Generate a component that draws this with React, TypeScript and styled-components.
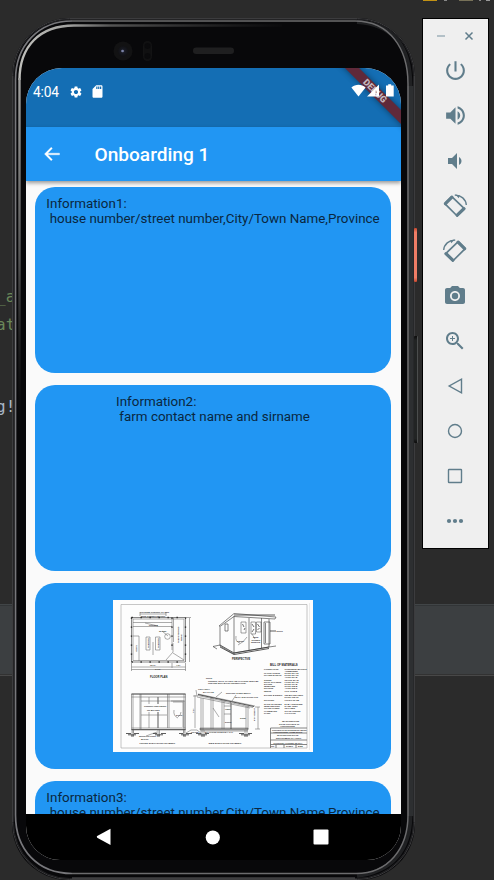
import React from "react";
import styled, { createGlobalStyle } from "styled-components";

const Global = createGlobalStyle`
  * { box-sizing: border-box; }
  body { margin: 0; background: #2b2b2b; overflow: hidden; font-family: Roboto, sans-serif; }
  svg { display: block; }
`;

const Desktop = styled.main`
  position: relative;
  width: 494px;
  height: 880px;
  overflow: hidden;
  display: flex;
  align-items: flex-start;
  gap: 7px;
  padding: 18px 0 0 12px;
  background: linear-gradient(
    #2b2b2b 604px,
    #414547 604px,
    #414547 605px,
    #323537 605px,
    #323537 606px,
    #3c3f41 606px,
    #3c3f41 674px,
    #323232 674px,
    #323232 675px,
    #484848 675px,
    #484848 676px,
    #2b2b2b 676px
  );
`;

const CodeText = styled.span<{ $top: number; $left: number; $color: string }>`
  position: absolute;
  top: ${(p) => p.$top}px;
  left: ${(p) => p.$left}px;
  color: ${(p) => p.$color};
  font: 16px/20px "DejaVu Sans Mono", monospace;
  white-space: pre;
`;

const TabMark = styled.i<{ $left: number; $width: number; $color: string }>`
  position: absolute;
  top: 0;
  left: ${(p) => p.$left}px;
  width: ${(p) => p.$width}px;
  height: 1px;
  background: ${(p) => p.$color};
`;

const Phone = styled.section`
  position: relative;
  flex: none;
  width: 403px;
  height: 862px;
  border-radius: 58px 58px 56px 56px;
  background: #08080a;
  padding: 50px 14px 20px;
`;

const Bezel = styled.svg`
  position: absolute;
  inset: 0;
`;

const SideKey = styled.i<{ $top: number; $height: number; $power?: boolean }>`
  position: absolute;
  z-index: 1;
  left: 402px;
  top: ${(p) => p.$top}px;
  width: ${(p) => (p.$power ? 3 : 4)}px;
  height: ${(p) => p.$height}px;
  border-radius: 1px;
  background: ${(p) =>
    p.$power ? "linear-gradient(#c4452c, #ee7d66 8%, #ee7d66 92%, #c4452c)" : "linear-gradient(#0c0c0c, #222424 4%, #222424 96%, #0c0c0c)"};
  border-right: ${(p) => (p.$power ? "0" : "1px solid #4b4d4d")};
`;

const Screen = styled.div`
  position: relative;
  width: 375px;
  height: 792px;
  overflow: hidden;
  border-radius: 36px 36px 34px 34px;
  background: #fafafa;
  display: flex;
  flex-direction: column;
`;

const StatusBar = styled.header`
  flex: none;
  height: 59px;
  display: flex;
  align-items: flex-start;
  padding: 15px 6px 0 7px;
  background: #146eb4;
  color: #fff;
`;

const Clock = styled.time`
  width: 36px;
  font-size: 13.8px;
  line-height: 18px;
  letter-spacing: -0.2px;
  white-space: nowrap;
`;

const StatusIcons = styled.div<{ $end?: boolean }>`
  position: relative;
  z-index: 3;
  display: flex;
  align-items: center;
  gap: 7px;
  margin-top: 1px;
  ${(p) => p.$end && "margin-left: auto; gap: 1px;"}
`;

const Ribbon = styled.div`
  position: absolute;
  z-index: 2;
  top: 17.5px;
  right: -28px;
  width: 108px;
  height: 10px;
  transform: rotate(45deg);
  background: #60293a;
  box-shadow: 0 0 6px rgba(0, 0, 0, 0.45);
  color: #c4b6bd;
  font-size: 9.2px;
  font-weight: 900;
  line-height: 10px;
  text-align: center;
`;

const AppBar = styled.header`
  position: relative;
  z-index: 1;
  flex: none;
  height: 53.5px;
  display: flex;
  align-items: center;
  gap: 32.5px;
  padding-left: 16px;
  background: #2196f3;
  box-shadow: 0 2px 4px rgba(0, 0, 0, 0.4);
`;

const Title = styled.h1`
  margin: 2px 0 0;
  color: #fff;
  font-size: 19.1px;
  font-weight: 500;
  line-height: 24px;
`;

const List = styled.div`
  flex: 1;
  min-height: 0;
  overflow: hidden;
  padding: 6px 10px 0 9px;
  display: flex;
  flex-direction: column;
  gap: 11.5px;
`;

const Card = styled.article`
  flex: none;
  height: 186.5px;
  border-radius: 20px;
  background: #2196f3;
  display: flex;
  justify-content: center;
  align-items: flex-start;
  padding-top: 9px;
`;

const Info = styled.p`
  margin: 0;
  color: #0a2740;
  font-size: 13.4px;
  line-height: 15.8px;
  white-space: pre;
`;

const Plan = styled.svg`
  margin-top: 8px;
  background: #fdfdfd;
`;

const NavBar = styled.nav`
  flex: none;
  height: 46px;
  background: #000;
  display: flex;
  align-items: center;
  justify-content: space-between;
  padding: 0 72px 0 70px;
`;

const Tools = styled.aside`
  flex: none;
  width: 67px;
  height: 531px;
  border: 1px solid #000;
  background: #efefef;
  color: #607d8b;
`;

const WindowButtons = styled.div`
  display: flex;
  justify-content: space-between;
  align-items: center;
  padding: 5px 14px 0 13px;
  height: 29px;
`;

const ToolButton = styled.button`
  display: flex;
  width: 64px;
  height: 45px;
  padding: 0;
  border: 0;
  background: none;
  color: inherit;
  align-items: center;
  justify-content: center;
`;

const Icon = ({ d, size = 24, children }: { d?: string; size?: number; children?: React.ReactNode }) => (
  <svg width={size} height={size} viewBox="0 0 24 24" fill="currentColor">
    {d && <path d={d} />}
    {children}
  </svg>
);

const rotateIcon = (
  <g fill="none" stroke="currentColor">
    <path d="M8.8 2.6 1.8 9.6 14.2 22 21.600 14.900Z" strokeWidth="1.7" strokeLinejoin="round" />
    <path d="M8.9 3.200 2.400 9.700M14.200 21.200 20.900 14.700" strokeWidth="3.2" strokeLinecap="round" />
    <path d="M11.800 1.200C18 .8 23 5.500 23.300 11" strokeWidth="1.4" />
    <path d="m12.300.6 4.500.9-1 2.700Z" fill="currentColor" stroke="none" />
  </g>
);

const tools: { label: string; icon: React.ReactNode }[] = [
  { label: "Power", icon: <Icon size={25} d="M13 3h-2v10h2V3zm4.83 2.17-1.42 1.42C17.99 7.86 19 9.81 19 12c0 3.87-3.13 7-7 7s-7-3.13-7-7c0-2.19 1.01-4.14 2.58-5.42L6.17 5.17C4.23 6.82 3 9.26 3 12c0 4.97 4.03 9 9 9s9-4.03 9-9c0-2.74-1.23-5.18-3.17-6.83z" /> },
  { label: "Volume up", icon: <Icon size={25} d="M3 9v6h4l5 5V4L7 9H3zm13.5 3c0-1.77-1.02-3.29-2.5-4.03v8.05c1.48-.73 2.5-2.25 2.5-4.02zM14 3.23v2.06c2.89.86 5 3.54 5 6.71s-2.11 5.85-5 6.71v2.06c4.01-.91 7-4.49 7-8.77s-2.99-7.86-7-8.77z" /> },
  { label: "Volume down", icon: <Icon d="M18.5 12c0-1.77-1.02-3.29-2.5-4.03v8.05c1.48-.73 2.5-2.25 2.5-4.02zM5 9v6h4l5 5V4L9 9H5z" /> },
  { label: "Rotate left", icon: <Icon>{rotateIcon}</Icon> },
  { label: "Rotate right", icon: <Icon><g transform="translate(24 0) scale(-1 1)">{rotateIcon}</g></Icon> },
  { label: "Screenshot", icon: <Icon><circle cx="12" cy="12" r="3.2" /><path d="M9 2 7.17 4H4c-1.1 0-2 .9-2 2v12c0 1.1.9 2 2 2h16c1.1 0 2-.9 2-2V6c0-1.1-.9-2-2-2h-3.17L15 2H9zm3 15c-2.76 0-5-2.24-5-5s2.24-5 5-5 5 2.24 5 5-2.24 5-5 5z" /></Icon> },
  { label: "Zoom", icon: <Icon d="m15.5 14h-.79l-.28-.27C15.41 12.59 16 11.11 16 9.5 16 5.91 13.09 3 9.5 3S3 5.91 3 9.5 5.91 16 9.5 16c1.61 0 3.09-.59 4.23-1.57l.27.28v.79l5 4.99L20.49 19l-4.99-5zm-6 0C7.01 14 5 11.99 5 9.5S7.01 5 9.5 5 14 7.01 14 9.5 11.99 14 9.5 14zm2.5-4h-2v2H9v-2H7V9h2V7h1v2h2v1z" /> },
  { label: "Back", icon: <Icon><path d="M18.5 5.2v13.6L6.2 12Z" fill="none" stroke="currentColor" strokeWidth="1.4" /></Icon> },
  { label: "Home", icon: <Icon><circle cx="12" cy="12" r="6.5" fill="none" stroke="currentColor" strokeWidth="1.4" /></Icon> },
  { label: "Overview", icon: <Icon><rect x="5.5" y="5.5" width="13" height="13" rx=".6" fill="none" stroke="currentColor" strokeWidth="1.4" /></Icon> },
  { label: "More", icon: <Icon><circle cx="6" cy="12" r="2.1" /><circle cx="12" cy="12" r="2.1" /><circle cx="18" cy="12" r="2.1" /></Icon> },
];

const Note = styled.text<{ $size?: number }>`
  font-family: "Liberation Sans", sans-serif;
  font-size: ${(p) => p.$size ?? 2.1}px;
  font-weight: 700;
  fill: #222;
  stroke: none;
`;

const bill: [string, string][] = [
  ["FOUNDATION", "CONCRETE BLOCKS"], ["", "4 REQUIRED"], ["FLOOR JOISTS", "2 PCS 2X4-12"], ["PLATES & SILLS", "6 PCS 2X4-10"],
  ["", "4 PCS 2X4-8"], ["STUDS", "12 PCS 2X4-8"], ["ROOF RAFTERS", "7 PCS 2X4-10"], ["DOORS", "2 PCS 1X4-8"],
  ["    WINDOWS", "3 PCS 2X2-8"], ["ROOSTS", "4 PCS 2X2-6"], ["NESTS", "1 PC 1X12-8"], ["", ""],
  ["DOORS & SIDING", "120 BOARD FEET"], ["", "6 PCS 1X6-10"], ["ROOFING", "1 ROLL 90 LB."], ["", ""],
  ["NAILS & HINGES", "5 LB. ASSORTED"], ["WIRE NETTING", "24 SQ. FEET"], ["GLASS PANES", "12 PANES"], ["HARDWARE", "3 PAIR HINGES"], ["PAINT", "1 GALLON"],
];

const FarmPlan = () => (
  <Plan width="200" height="152" viewBox="0 0 200 152" fill="none" stroke="#666" strokeWidth=".55">
    <path d="M8 4.500H194V148H8Z" stroke="#999" />
    <path d="M196.500 3V150" stroke="#ddd" />
    {/* floor plan */}
    <path d="M18.500 17.500H72.500V62H18.500Z" strokeWidth=".7" stroke="#555" />
    <path d="M20 19H71V60.500H20ZM20 22.500H59M20 26.500H59M20 36H26V61M59 18V50M60.500 18V42M33 37H37V50H33ZM42.500 37H47V50H42.500ZM40 42V55M76.500 18V62M73 17.500H78M18.500 67H72.500M18.500 69.500H72.500M18.500 63V71M59 63V68M72.500 63V71M27 12V16M53 12V16M27 14H53" />
    <path d="M60 43V52L53 60M60 53L71 60M32 23L45 26M49 31L55 36" />
    <circle cx="54.500" cy="36.500" r="2.800" />
    <path d="M18.500 17.500H72.500M18.500 62H72.500M72.500 17.500V62M18.500 17.500V62M59 17.500V52" stroke="#222" strokeWidth="1.400" strokeDasharray="1.300 7.700" />
    <Note x="27" y="13">COVERED OPENING OF RUN</Note>
    <Note x="28" y="17">WIRE SCREEN NETTING</Note>
    <Note x="36" y="26">ROOSTS</Note><Note x="46" y="32">WATER</Note><Note transform="translate(23.500 52) rotate(-90)">NESTS</Note>
    <Note transform="translate(36 48) rotate(-90)">FEEDERS</Note><Note transform="translate(45.500 48) rotate(-90)">FEEDERS</Note>
    <Note transform="translate(66 43) rotate(-90)">FEED STORAGE</Note><Note transform="translate(68.500 41) rotate(-90)">ROOM</Note>
    <Note x="37" y="66">10'-0"</Note><Note x="63" y="66">4'-0"</Note><Note x="42" y="69.500">14'-0"</Note>
    <Note $size={2.7} x="37" y="77.500">FLOOR PLAN</Note>
    {/* front elevation */}
    <path d="M18.500 94H72.500V130H18.500ZM18.500 97H72.500M18.500 128H72.500M27 94V129M28 94V129M36 97V128M44.500 97V128M45.500 97V128M54.500 94V128M56 94V128M28 115H54M28 101H72M58 101H71V128M60 102H70V127M71 94V133M20 94V133" />
    <path d="M18.500 94H72.500M18.500 129.500H72.500" stroke="#444" strokeWidth=".8" />
    <path d="M19 130V136M20.500 130V136M45 130V136M46.500 130V136M70.500 130V136M72 130V136M33 136L44 132M73 133L78 130H84L89 134" />
    <path d="M13 133.500H18M21 133.500H26M40 133.500H44M48 133.500H53M66 133.500H70M73 133.500H79M15 134.800H23M42 134.800H50M68 134.800H76M18 136H21M44 136H47M70 136H73" stroke="#333" strokeWidth=".8" />
    <path d="M30 104H53V112H30Z" fill="#fdfdfd" stroke="none" />
    <Note x="31" y="107">CORRUGATED SIDING</Note><Note x="34" y="110.500">OR BOARDS</Note><Note x="63" y="116">DOOR</Note>
    <path d="M61 110Q60 116 65 118M68 112Q68 115 65 117" />
    <Note x="26" y="137">WOOD OR CONC.</Note><Note x="28" y="139.500">BLOCK</Note><Note x="78" y="132.500">GRADE</Note>
    <Note $size={2.5} x="26.500" y="144">FRONT ELEVATION FRAMING</Note>
    {/* perspective */}
    <path d="M106 26L121 13.500L163 17L162 19L121 16.500L107 26.500ZM107 27V46L121 54V16M121 53L156 47V19M136 18V50M148.500 18V48M107 45L100 46.500L104 49M156 47L163 46M151 22H157V44H151ZM152.500 23V43M112 24H115V31H112Z" stroke="#444" strokeWidth=".65" />
    <path d="M107 45L121 53L156 47M107 47L121 54.500L156 48.500M157 31H163M121 15H162" stroke="#333" strokeWidth=".8" />
    <path d="M128 22H133V33H128ZM138 22H142.500V34H138ZM143.500 22H148V32H143.500Z" stroke="#444" strokeWidth=".5" />
    <path d="M129.500 24L131 27M131 30L132 28M139 24L141 27M139 32L141 29M144.500 24L146.500 27M144.500 30L146.500 28" stroke="#333" strokeWidth=".7" />
    <path d="M123 36Q122 42 127 43M134 37Q131 42 125 45M142 39L139 34" />
    <Note x="163.500" y="32">DOOR</Note><Note x="124" y="42">SIDING</Note><Note x="140" y="38">WIRE</Note><Note x="138.500" y="40.500">SCREEN</Note><Note x="138" y="43">WINDOW</Note>
    <Note $size={2.6} x="119" y="60">PERSPECTIVE</Note>
    <Note x="93" y="79">NOTE:</Note><Note $size={2} x="95" y="81.500">GIRDERS, SILLS, PLATES AND FLOORING MUST BE</Note><Note $size={2} x="95" y="84">TREATED WITH WOOD PRESERVATIVE.</Note>
    {/* side elevation */}
    <path d="M85 94L142 106M85 95.500L140 107.500M84 97L137 108M88 98V130M90 98V130M98 97V129M100 98V129M109 100V129M111 100V129M117.500 102V129M118.500 103V129M133 106V129M135 106V129M87 128H135V130H87ZM100 108L106 117M111 106H118M111 114H118M82 95V128M80 96H85M145 107V129M142 107H147M142 129H147M87 131H135" />
    <path d="M85 94.500L141 106.500M87 129H135" stroke="#444" strokeWidth=".9" />
    <path d="M89 130V136M91 130V136M132 130V136M134 130V136M83 90L84 96M103 97L109 92M119 101L123 95" />
    <path d="M83 133.500H88M92 133.500H96M126 133.500H131M135 133.500H139M85 134.800H94M128 134.800H137M88 136H92M131 136H135" stroke="#333" strokeWidth=".8" />
    <Note x="85" y="90">1X6 FASCIA</Note><Note x="90" y="92.500">2X4 PLATE</Note><Note x="113" y="93.500">ROOFING SHEET METAL</Note><Note x="122" y="97.500">WALL SHEATHING 1X6</Note>
    <Note x="112" y="110">VENT</Note><Note x="127" y="119">STUD</Note><Note x="112" y="123">DOOR</Note>
    <Note transform="translate(81 113) rotate(-90)">7'-0"</Note><Note transform="translate(142 121) rotate(-90)">6'-0" HEIGHT</Note>
    <Note x="92" y="132.500">2X4 FLOOR JOISTS 24" O.C.</Note>
    <Note $size={2.5} x="95.500" y="144">SIDE ELEVATION FRAMING</Note>
    {/* bill of materials and title block */}
    <Note $size={2.8} x="157" y="66">BILL OF MATERIALS</Note>
    {bill.map(([a, b], i) => (
      <React.Fragment key={i}>
        <Note $size={2.2} x="151" y={69.5 + i * 2.22}>{a}</Note>
        <Note $size={2.2} x="171.5" y={69.5 + i * 2.22}>{b}</Note>
      </React.Fragment>
    ))}
    <Note $size={2.5} x="169" y="121.500">WASHINGTON</Note><Note x="166" y="124.500">STATE COLLEGE OF</Note><Note x="167" y="127">AGRICULTURE</Note>
    <path d="M157.500 128H194M157.500 133H194M157.500 140H194M157.500 144.500H194M157.500 128V148M163 144.500V148M171 144.500V148M183 144.500V148" stroke="#666" strokeWidth=".8" />
    <Note x="159" y="130.500">COOPERATIVE EXTENSION WORK</Note><Note x="160" y="132.600">AGRICULTURE, HOME ECON.</Note>
    <Note x="164" y="136">WASHINGTON STATE</Note><Note x="163" y="139">DEPARTMENT OF AGRIC.</Note>
    <Note $size={2.4} x="160.500" y="143.500">POULTRY HOUSE 10'X14'</Note><Note x="158" y="147.200">NO.</Note><Note x="173" y="147.200">SHEET</Note><Note x="185" y="147.200">5725</Note>
  </Plan>
);

export default function App() {
  return (
    <>
      <Global />
      <Desktop>
        <TabMark $left={423} $width={14} $color="#c29214" />
        <TabMark $left={459} $width={14} $color="#777158" />
        <TabMark $left={444} $width={3} $color="#888" />
        <TabMark $left={479} $width={2} $color="#888" />
        <TabMark $left={486} $width={4} $color="#999" />
        <CodeText $top={287} $left={-4} $color="#6a8759">_a</CodeText>
        <CodeText $top={315} $left={-4} $color="#6a8759">at</CodeText>
        <CodeText $top={397} $left={-4} $color="#a9b7c6">g!</CodeText>
        <Phone>
          <SideKey $power $top={210} $height={54} />
          <SideKey $top={318} $height={107} />
          <Bezel width="403" height="862" viewBox="0 0 403 862" fill="none">
            <defs>
              <linearGradient id="shineTop" gradientUnits="userSpaceOnUse" x1="0" y1="0" x2="280" y2="0">
                <stop offset="0" stopColor="#c4c4c0" /><stop offset=".2" stopColor="#a2a2a0" /><stop offset=".35" stopColor="#555" /><stop offset="1" stopColor="#333" stopOpacity="0" />
              </linearGradient>
              <linearGradient id="shineLeft" gradientUnits="userSpaceOnUse" x1="0" y1="60" x2="0" y2="420">
                <stop offset="0" stopColor="#a2a2a0" /><stop offset=".5" stopColor="#555" /><stop offset="1" stopColor="#111" stopOpacity="0" />
              </linearGradient>
              <radialGradient id="lens"><stop stopColor="#55587a" /><stop offset=".3" stopColor="#191b25" /><stop offset="1" stopColor="#101012" /></radialGradient>
            </defs>
            <rect x=".5" y=".5" width="402" height="861" rx="57" stroke="#3c3c3e" />
            <rect x="1.500" y="1.500" width="400" height="859" rx="56" stroke="#232325" />
            <path d="M398.500 68V798" stroke="#2d2f31" strokeWidth="6" />
            <path d="M345 4Q398 7 398.500 68M398.500 798Q397 851 345 858" stroke="#202123" strokeWidth="4" />
            <path d="M60 3H343C378 3 396 31 396 66V797C396 831 376 855.500 344 855.500H60" stroke="#6c6c6e" strokeWidth="1.500" />
            <path d="M60 855.500C26 855.500 3.500 832 3.500 797V62C3.500 27 27 3 60 3" stroke="#77777b" strokeWidth="1.700" />
            <path d="M60 860H343" stroke="#5a5a5c" />
            <path d="M7.500 62C7.500 28 28 7.500 62 7.500H270" stroke="url(#shineTop)" strokeWidth="2.400" />
            <path d="M7.500 60V420" stroke="url(#shineLeft)" strokeWidth="2.400" />
            <circle cx="111" cy="33" r="9.500" fill="#121213" />
            <circle cx="111" cy="33" r="5.500" fill="url(#lens)" />
            <circle cx="110.500" cy="33" r="1.300" fill="#7b83a6" />
            <rect x="131.500" y="23.500" width="8" height="19" rx="4" fill="#101011" stroke="#131314" />
            <circle cx="135.500" cy="28" r="3" fill="#0a0a0c" /><circle cx="135.500" cy="38" r="3" fill="#0a0a0c" />
            <rect x="181" y="29.500" width="41" height="6.500" rx="3.200" fill="#1f1f20" />
          </Bezel>
          <Screen>
            <StatusBar>
              <Clock>4:04</Clock>
              <StatusIcons>
                <Icon size={14} d="m19.14 12.94c.04-.3.06-.61.06-.94 0-.32-.02-.64-.07-.94l2.03-1.58c.18-.14.23-.41.12-.61l-1.92-3.32c-.12-.22-.37-.29-.59-.22l-2.39.96c-.5-.38-1.03-.7-1.62-.94L14.4 2.81c-.04-.24-.24-.41-.48-.41h-3.84c-.24 0-.43.17-.47.41l-.36 2.54c-.59.24-1.13.57-1.62.94l-2.39-.96c-.22-.08-.47 0-.59.22L2.74 8.87c-.12.21-.08.47.12.61l2.03 1.58c-.05.3-.09.63-.09.94s.02.64.07.94l-2.03 1.58c-.18.14-.23.41-.12.61l1.92 3.32c.12.22.37.29.59.22l2.39-.96c.5.38 1.03.7 1.62.94l.36 2.54c.05.24.24.41.48.41h3.84c.24 0 .44-.17.47-.41l.36-2.54c.59-.24 1.13-.56 1.62-.94l2.39.96c.22.08.47 0 .59-.22l1.92-3.32c.12-.22.07-.47-.12-.61l-2.01-1.58zM12 15.6c-1.98 0-3.6-1.62-3.6-3.6s1.62-3.6 3.6-3.6 3.6 1.62 3.6 3.6-1.62 3.6-3.6 3.6z" />
                <Icon size={15} d="M18 2h-8L4.02 8 4 20c0 1.1.9 2 2 2h12c1.1 0 2-.9 2-2V4c0-1.1-.9-2-2-2zm-6 6h-2V4h2v4zm3 0h-2V4h2v4zm3 0h-2V4h2v4z" />
              </StatusIcons>
              <StatusIcons $end>
                <svg width="15" height="13" viewBox="0 0 15 13" fill="#fff"><path d="M.4 3.500C4.500-.2 10.500-.2 14.600 3.500L7.500 12.500Z" /></svg>
                <svg width="14" height="13" viewBox="0 0 14 13" fill="#fff"><path fillRule="evenodd" d="M0 12.500 12 .5V12.500ZM8.500 6.500V9.200H9.500V6.500ZM8.500 10.300V11.200H9.500V10.300Z" /></svg>
                <svg width="13" height="13" viewBox="0 0 13 13" fill="#fff"><path d="M4 1.500h2.200V.3h3v1.200h2.500v11H4Z" /></svg>
              </StatusIcons>
            </StatusBar>
            <Ribbon>DEBUG</Ribbon>
            <AppBar>
              <svg width="20" height="20" viewBox="0 0 24 24" fill="#fff" stroke="#fff" strokeWidth=".4"><path d="M21 11H6.830l5.590-5.590L11 4l-8 8 8 8 1.410-1.410L6.830 13H21z" /></svg>
              <Title>Onboarding 1</Title>
            </AppBar>
            <List>
              <Card><Info>{"Information1:\n house number/street number,City/Town Name,Province"}</Info></Card>
              <Card><Info>{"Information2:\n farm contact name and sirname"}</Info></Card>
              <Card><FarmPlan /></Card>
              <Card><Info>{"Information3:\n house number/street number,City/Town Name,Province"}</Info></Card>
            </List>
            <NavBar>
              <svg width="16" height="18" viewBox="0 0 16 18" fill="#fff"><path d="M1.200 8.100 14.500.8V17L1.200 9.700Q.3 9 1.200 8.100Z" /></svg>
              <svg width="15" height="15" viewBox="0 0 15 15" fill="#fff"><circle cx="7.800" cy="7.500" r="7.100" /></svg>
              <svg width="16" height="16" viewBox="0 0 16 16" fill="#fff"><rect x=".5" y=".5" width="15" height="15" rx="1" /></svg>
            </NavBar>
          </Screen>
        </Phone>
        <Tools>
          <WindowButtons>
            <svg width="10" height="10" viewBox="0 0 10 10" stroke="#9fb1ba" strokeWidth="1.500"><path d="M1 5H9" /></svg>
            <svg width="10" height="10" viewBox="0 0 10 10" stroke="#607d8b" strokeWidth="1.500"><path d="M1.500 1.500 8.500 8.500M8.500 1.500 1.500 8.500" /></svg>
          </WindowButtons>
          {tools.map((t) => <ToolButton key={t.label} aria-label={t.label}>{t.icon}</ToolButton>)}
        </Tools>
      </Desktop>
    </>
  );
}
